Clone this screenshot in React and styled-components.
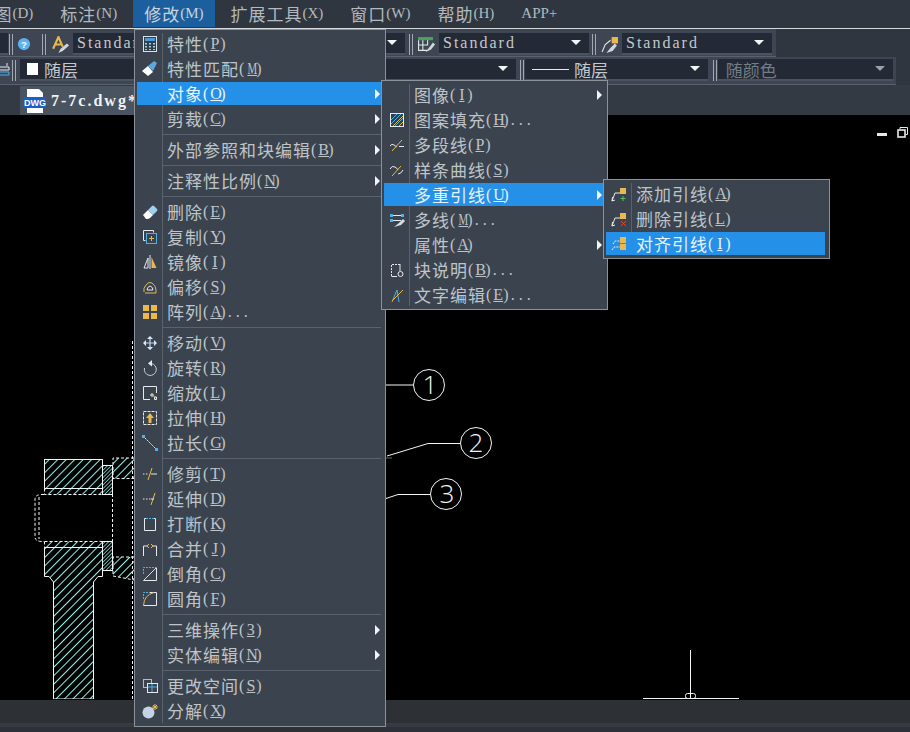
import React from "react";
import styled, {createGlobalStyle} from "styled-components";

const GlobalStyle = createGlobalStyle`
  html, body {
    margin: 0;
    background: #000;
  }
`;

const CJK = `"Noto Sans CJK SC", "Liberation Serif", sans-serif`;
const SERIF = `"Liberation Serif", "Noto Sans CJK SC", serif`;

const Page = styled.div`
  position: relative;
  display: flex;
  flex-direction: column;
  width: 910px;
  height: 732px;
  overflow: hidden;
  background: #000;
`;

const MenuBar = styled.div`
  display: flex;
  height: 29px;
  flex: none;
  box-sizing: border-box;
  background: #2f3640;
  border-bottom: 1px solid #d5d9dc;
  overflow: hidden;
`;

const BarItem = styled.div`
  flex: none;
  display: flex;
  align-items: center;
  height: 27px;
  padding: 0 11.5px;
  margin-right: 4px;
  margin-left: ${(p) => p.$offset || 0}px;
  font-family: ${CJK};
  font-size: 17px;
  letter-spacing: 1px;
  color: ${(p) => (p.$active ? "#c9d3dc" : "#b3b9bf")};
  background: ${(p) => (p.$active ? "#1c5f9e" : "transparent")};
`;

const BarLatin = styled.span`
  font-family: ${SERIF};
  font-size: 15px;
  letter-spacing: 0;
`;

const ToolRow = styled.div`
  display: flex;
  flex: none;
  align-items: center;
  height: 28px;
  box-sizing: border-box;
  background: #2f3640;
`;

const ToolStrip = styled.div`
  display: flex;
  align-items: center;
  width: ${(p) => p.$w}px;
  height: 100%;
  box-sizing: border-box;
  padding-top: ${(p) => p.$pt || 0}px;
  padding-bottom: ${(p) => p.$pb || 0}px;
  background: #3d4652;
  border-bottom: 1px solid #59626d;
`;

const Grip = styled.div`
  flex: none;
  width: 2px;
  height: 21px;
  margin-left: ${(p) => p.$ml || 0}px;
  border-left: 1px solid #a2a8ae;
  border-right: 1px solid #a2a8ae;
`;

const ToolIcon = styled.div`
  flex: none;
  display: flex;
  align-items: center;
  justify-content: center;
  width: ${(p) => p.$w}px;
  overflow: hidden;
`;

const Combo = styled.div`
  flex: none;
  display: flex;
  align-items: center;
  gap: 6px;
  width: ${(p) => p.$w}px;
  height: 22px;
  margin-left: ${(p) => p.$ml || 0}px;
  padding-left: 4px;
  box-sizing: border-box;
  background: #232935;
  border-bottom: 2px solid #4a535f;
  font-family: ${SERIF};
  font-size: 16px;
  letter-spacing: 2px;
  color: ${(p) => (p.$dim ? "#747c86" : "#c3c8cd")};
  overflow: hidden;
`;

const ComboCjk = styled.span`
  font-family: ${CJK};
  font-size: 17px;
  letter-spacing: 0;
  white-space: nowrap;
`;

const DropArrow = styled.span`
  flex: none;
  width: 0;
  height: 0;
  margin-left: auto;
  margin-right: 8px;
  margin-top: -2px;
  border-left: 5px solid transparent;
  border-right: 5px solid transparent;
  border-top: 5px solid ${(p) => (p.$dim ? "#9aa1a8" : "#f2f4f5")};
`;

const Swatch = styled.span`
  flex: none;
  width: 11px;
  height: 12px;
  margin-left: 3px;
  background: #fff;
`;

const LineSample = styled.span`
  flex: none;
  width: 37px;
  height: 1px;
  margin-left: 3px;
  margin-right: -1px;
  background: #e8eaec;
`;

const TabStrip = styled.div`
  display: flex;
  flex: none;
  align-items: flex-end;
  height: 30px;
  padding-left: 20px;
  background: #333a44;
`;

const Tab = styled.div`
  display: flex;
  align-items: center;
  gap: 5px;
  width: 130px;
  height: 29px;
  padding-left: 4px;
  box-sizing: border-box;
  background: #4a5461;
  font-family: ${SERIF};
  font-size: 16px;
  font-weight: 700;
  letter-spacing: 2px;
  color: #f0f2f4;
  white-space: nowrap;
`;

const Canvas = styled.div`
  position: relative;
  flex: 1;
  background: #000;
`;

const Drawing = styled.svg`
  display: block;
`;

const WindowButtons = styled.div`
  position: absolute;
  top: 12px;
  right: 2px;
  display: flex;
  align-items: center;
  gap: 10px;
`;

const MinButton = styled.span`
  width: 10px;
  height: 3px;
  margin-top: 3px;
  background: #e8e8e8;
`;

const RestoreButton = styled.svg`
  display: block;
`;

const BottomBar = styled.div`
  flex: none;
  height: 32px;
  box-sizing: border-box;
  padding-top: 23px;
  background: #2d3035;
`;

const BottomBand = styled.div`
  height: 4px;
  background: #363a45;
`;

const Menu = styled.div`
  position: absolute;
  left: ${(p) => p.$x}px;
  top: ${(p) => p.$y}px;
  display: flex;
  flex-direction: column;
  width: ${(p) => p.$w}px;
  box-sizing: border-box;
  padding: 1px 4px ${(p) => p.$pb}px 2px;
  background: #3a434e;
  border: 1px solid #8b929a;
  font-family: ${CJK};
  font-size: 17px;
  letter-spacing: 1px;
  color: #bfc4c9;

  &::before {
    content: "";
    position: absolute;
    left: 27px;
    top: 3px;
    bottom: 3px;
    width: 1px;
    background: #59626d;
  }
`;

const MenuRow = styled.div`
  position: relative;
  flex: none;
  display: flex;
  align-items: center;
  height: 23px;
  margin: 1px 0;
  background: ${(p) => (p.$active ? "#2490e8" : "transparent")};
  color: ${(p) => (p.$active ? "#e9f3fb" : "inherit")};
  white-space: nowrap;
`;

const MenuIcon = styled.div`
  flex: none;
  display: flex;
  align-items: center;
  justify-content: center;
  width: 25px;
  height: 100%;
  margin-right: 5px;
`;

const Hot = styled.span`
  font-family: ${SERIF};
  font-size: 16px;
  letter-spacing: 2px;
`;

const HotKey = styled.u`
  display: inline-block;
  width: 9px;
  text-align: center;
  letter-spacing: 0;
  margin-right: 1px;
  transform: ${(p) => (p.$wide ? "scaleX(.68)" : "none")};
  white-space: nowrap;
`;

const Dots = styled.span`
  letter-spacing: 4px;
`;

const SubArrow = styled.span`
  width: 0;
  height: 0;
  margin-left: auto;
  margin-right: 1px;
  border-top: 5px solid transparent;
  border-bottom: 5px solid transparent;
  border-left: 5px solid #f2f4f5;
`;

const MenuSep = styled.div`
  flex: none;
  height: 1px;
  margin: 2.5px 0 2.5px 26px;
  background: #59626d;
`;

const W = "#e6eaed";
const G = "#e9b84e";
const B = "#4fb0ea";

const glyphs = {
  calc: <><rect x="1.5" y=".5" width="13" height="15" fill="#2f3f4c" stroke="#dce4e8"/><rect x="3" y="2" width="10" height="3" fill="#4a9ad8"/><path d="M3 7h2v1.5H3zM7 7h2v1.5H7zM11 7h2v1.5h-2zM3 10h2v1.5H3zM7 10h2v1.5H7zM11 10h2v1.5h-2zM3 13h2v1H3zM7 13h2v1H7zM11 13h2v1h-2z" fill="#a8cde8"/></>,
  brush: <><path d="M0 10 L6 5 L11 11 L6 15 Z" fill="#fff"/><path d="M6 5 L12 0 L15 2 L11 10 Z" fill="#5ea8e0"/></>,
  eraser: <><path d="M1 11 L6 6 L11 11 L8 14 Q7 15 5 15 L4 15 Z" fill="#fff"/><path d="M6 6 L10 2 Q11 1 12 2 L15 5 Q16 6 15 7 L11 11 Z" fill="#9fd0f2"/></>,
  copy: <><path d="M3.5 11.5H1.5V1.5H11.5V3.5" fill="none" stroke={W}/><rect x="4.5" y="4.5" width="10" height="10" fill="none" stroke={B}/><path d="M9.5 7v5M7 9.5h5" stroke={G}/></>,
  mirror: <><path d="M2 14 L6 4 V14 Z" fill="none" stroke={W}/><path d="M8 1V15" stroke={W}/><path d="M9.5 3 L14.5 14 H9.5 Z" fill={G}/></>,
  offset: <><path d="M2 13 Q1 9 4 6 Q7 2 10 4 Q14 7 14 11 L14 14 H3" fill="none" stroke={G}/><path d="M5 11 Q5 8 8 7 Q11 8 11 11 H5" fill="none" stroke={W}/></>,
  array: <><rect x="1" y="1" width="6" height="6" fill={G}/><rect x="9" y="1" width="6" height="6" fill={G}/><rect x="1" y="9" width="6" height="6" fill={G}/><rect x="9" y="9" width="6" height="6" fill={G}/></>,
  move: <><path d="M8 1 L11 4 H5 Z M8 15 L5 12 H11 Z M1 8 L4 5 V11 Z M15 8 L12 11 V5 Z" fill={W}/><path d="M8 3V13M3 8H13" stroke="#b8d8f0" strokeWidth="1.2"/></>,
  rotate: <><path d="M9 3.5 A6 6 0 1 1 2.5 8" fill="none" stroke="#c9ced3"/><path d="M6 3.5 L10 0 V6.5 Z" fill={W}/></>,
  scale: <><path d="M8 14.5H1.5V1.5H14.5V8" fill="none" stroke={W}/><path d="M9 9h2v2H9zM12.5 12h2v2.5h-2z" fill="none" stroke={W}/><path d="M10 10l4 3" stroke={G}/></>,
  stretch: <><rect x="1.5" y="1.5" width="13" height="13" fill="none" stroke={W} strokeDasharray="3 1"/><path d="M8 3 L12 8 H9.5 V13 H6.5 V8 H4 Z" fill={G}/></>,
  lengthen: <><path d="M3 3 L14 14" stroke={W} strokeDasharray="2 1"/><rect x="0" y="0" width="3" height="3" fill={B}/><rect x="13" y="13" width="3" height="3" fill={B}/></>,
  trim: <><path d="M6 14 L10 2" stroke={G}/><path d="M1 8h1.5M4 8h1.5" stroke={W}/><path d="M9 8h6" stroke={W}/></>,
  extend: <><path d="M9 14 L13 2" stroke={G}/><path d="M1 8h1.5M4 8h1.5M7 8h1.5" stroke={W}/><path d="M9 8h3" stroke={W}/></>,
  breakIcon: <><path d="M4 2.5H2.5V14.5H13.5V2.5H12" fill="none" stroke={W}/><path d="M4 2.5H12" stroke={B} strokeDasharray="2 1"/></>,
  join: <><path d="M1.5 15V5H5M14.5 15V5H11" fill="none" stroke={W}/><path d="M5 5L7 3M5 5L7 7M11 5L9 3M11 5L9 7" stroke={G}/></>,
  chamfer: <><path d="M1.5 8V1.5H14" fill="none" stroke={B} strokeDasharray="2 1"/><path d="M1.5 14.5H14.5V2" fill="none" stroke={W}/><path d="M1.5 14.5L14.5 1.5" stroke="#d8dde0"/></>,
  fillet: <><path d="M1.5 8V1.5H8" fill="none" stroke={B} strokeDasharray="2 1"/><path d="M8 14.5H14.5V1.5H8" fill="none" stroke={W}/><path d="M1.5 14.5Q2 4 12 1.5" fill="none" stroke={G}/><path d="M1.5 14.5H8" stroke={W}/></>,
  space: <><rect x="1.5" y="1.5" width="8" height="8" fill="none" stroke={G}/><rect x="5.5" y="5.5" width="10" height="9" fill="#3a434e" stroke={W}/><path d="M6 9h9M10 6v8" stroke={B}/></>,
  explode: <><circle cx="6.5" cy="9.5" r="6" fill="#c5d2e6"/><path d="M13 1v6M10 4h6M11 2l4 4M15 2l-4 4" stroke={G}/></>,
  hatch: <><rect x="1.5" y="1.5" width="13" height="13" fill="#2f3f4c" stroke={W}/><path d="M2 8L8 2M2 12L12 2M6 14L14 6" stroke={B}/><path d="M4 14L14 4M10 14L14 10" stroke={G}/></>,
  pline: <><path d="M1 9Q3 6 5 8L8 10" fill="none" stroke={W}/><path d="M3 14L13 3" stroke={G}/><path d="M10 9.5h5" stroke={W}/></>,
  spline: <><path d="M1 7Q3 3 6 5T9 8" fill="none" stroke={W}/><path d="M3 14L12 4" stroke={G}/><path d="M9 12Q12 12 14 8" fill="none" stroke={W}/></>,
  mline: <><rect x="1" y="2" width="3" height="3" fill={B}/><rect x="12" y="2" width="3" height="3" fill={B}/><rect x="1" y="7" width="3" height="3" fill={B}/><path d="M4 3.5H12M4 8.5H12" stroke={W}/><path d="M5 15L10 11L14 7L16 9L12 13Z" fill="#d9dfe4"/></>,
  blockNote: <><path d="M2.5 14V2.5H11" fill="none" stroke={W} strokeDasharray="2 1"/><path d="M11 2V9M2.5 14.5H8" stroke={W}/><circle cx="11.5" cy="12" r="2.5" fill="none" stroke={W}/></>,
  textEdit: <><path d="M3 15L8 3L10 15" fill="none" stroke={B}/><path d="M3 14L14 3" stroke={G}/></>,
  leaderAdd: <><path d="M1 15L4 7H9" fill="none" stroke={W}/><path d="M1 15L4 14M1 15L1.5 11" stroke={W}/><rect x="9" y="2" width="6" height="6" fill={G}/><path d="M12 10v5M9.5 12.5h5" stroke="#4fc36a"/></>,
  leaderDel: <><path d="M1 15L4 7H9" fill="none" stroke={W}/><path d="M1 15L4 14M1 15L1.5 11" stroke={W}/><rect x="9" y="2" width="6" height="6" fill={G}/><path d="M10 10l5 5M15 10l-5 5" stroke="#d8503c"/></>,
  leaderAlign: <><path d="M2 8L4 5H9M1 14L3 11H9" fill="none" stroke={W} strokeDasharray="2 1"/><rect x="9" y="1" width="6" height="6" fill={G}/><rect x="9" y="8" width="6" height="6" fill={G}/></>,
  help: <><circle cx="8" cy="8" r="7" fill="#5cb2ee"/><text x="8" y="12" textAnchor="middle" fontSize="11" fontWeight="700" fontFamily="Liberation Sans" letterSpacing="0" fill="#fff">?</text></>,
  textStyle: <><path d="M2 12L7 1L11 10M4 8H9" fill="none" stroke={G} strokeWidth="2"/><path d="M7 16L9 12L15 7L17 9L11 14Z" fill="#cfd6dc"/></>,
  table: <><rect x="1" y="1" width="14" height="3" fill="#49a35f"/><path d="M1.5 4V13.5H10M5.5 4V13M10 4V9M1.5 8.5H10" fill="none" stroke={W}/><path d="M8 15L12 10L15 6L17 8L13 13Z" fill="#cfd6dc"/></>,
  mleader: <><path d="M1 15L4 8L9 4" fill="none" stroke={W}/><rect x="10" y="1" width="6" height="6" fill={G}/><path d="M5 16L9 11L13 7L15 9L11 14Z" fill="#cfd6dc"/></>,
  layer: <><path d="M10 1v3M1 5H12V8H1Z" fill="none" stroke={W}/><path d="M1 10H12V13H1Z" fill="none" stroke={B}/></>,
};

const Icon = ({name, size = 16}) => (
  <svg width={size} height={size} viewBox="0 0 16 16" style={{display: "block", overflow: "visible"}}>
    {glyphs[name]}
  </svg>
);

const SEP = {sep: true};

const mainItems = [
  {icon: "calc", text: "特性", hot: "P"},
  {icon: "brush", text: "特性匹配", hot: "M"},
  {text: "对象", hot: "O", arrow: true, active: true},
  {text: "剪裁", hot: "C", arrow: true},
  SEP,
  {text: "外部参照和块编辑", hot: "B", arrow: true},
  SEP,
  {text: "注释性比例", hot: "N", arrow: true},
  SEP,
  {icon: "eraser", text: "删除", hot: "E"},
  {icon: "copy", text: "复制", hot: "Y"},
  {icon: "mirror", text: "镜像", hot: "I"},
  {icon: "offset", text: "偏移", hot: "S"},
  {icon: "array", text: "阵列", hot: "A", dots: true},
  SEP,
  {icon: "move", text: "移动", hot: "V"},
  {icon: "rotate", text: "旋转", hot: "R"},
  {icon: "scale", text: "缩放", hot: "L"},
  {icon: "stretch", text: "拉伸", hot: "H"},
  {icon: "lengthen", text: "拉长", hot: "G"},
  SEP,
  {icon: "trim", text: "修剪", hot: "T"},
  {icon: "extend", text: "延伸", hot: "D"},
  {icon: "breakIcon", text: "打断", hot: "K"},
  {icon: "join", text: "合并", hot: "J"},
  {icon: "chamfer", text: "倒角", hot: "C"},
  {icon: "fillet", text: "圆角", hot: "F"},
  SEP,
  {text: "三维操作", hot: "3", arrow: true},
  {text: "实体编辑", hot: "N", arrow: true},
  SEP,
  {icon: "space", text: "更改空间", hot: "S"},
  {icon: "explode", text: "分解", hot: "X"},
];

const objectItems = [
  {text: "图像", hot: "I", arrow: true},
  {icon: "hatch", text: "图案填充", hot: "H", dots: true},
  {icon: "pline", text: "多段线", hot: "P"},
  {icon: "spline", text: "样条曲线", hot: "S"},
  {text: "多重引线", hot: "U", arrow: true, active: true},
  {icon: "mline", text: "多线", hot: "M", dots: true},
  {text: "属性", hot: "A", arrow: true},
  {icon: "blockNote", text: "块说明", hot: "B", dots: true},
  {icon: "textEdit", text: "文字编辑", hot: "E", dots: true},
];

const leaderItems = [
  {icon: "leaderAdd", text: "添加引线", hot: "A"},
  {icon: "leaderDel", text: "删除引线", hot: "L"},
  {icon: "leaderAlign", text: "对齐引线", hot: "I", active: true},
];

const PopupMenu = ({items, x, y, w, pb = 2}) => (
  <Menu $x={x} $y={y} $w={w} $pb={pb}>
    {items.map((item, i) => item.sep ? <MenuSep key={i}/> : (
      <MenuRow key={i} $active={item.active}>
        <MenuIcon>{item.icon && <Icon name={item.icon}/>}</MenuIcon>
        {item.text}
        <Hot>(<HotKey $wide={item.hot === "M"}>{item.hot}</HotKey>){item.dots && <Dots>...</Dots>}</Hot>
        {item.arrow && <SubArrow/>}
      </MenuRow>
    ))}
  </Menu>
);

const HATCH = "#8ff5e8";
const LINE = "#f4f6f6";

const CadDrawing = () => (
  <Drawing width="910" height="584" viewBox="0 116 910 584">
    <defs>
      <pattern id="hatch" width="10" height="6" patternUnits="userSpaceOnUse" patternTransform="rotate(-45)">
        <line x1="0" y1="0" x2="10" y2="0" stroke={HATCH} strokeWidth="2"/>
      </pattern>
      <pattern id="hatchDense" width="10" height="2.6" patternUnits="userSpaceOnUse" patternTransform="rotate(-45)">
        <line x1="0" y1="0" x2="10" y2="0" stroke={HATCH} strokeWidth="1.4"/>
      </pattern>
    </defs>
    <g fill="none" stroke={LINE}>
      <rect x="44.5" y="460.5" width="58" height="29" fill="url(#hatch)"/>
      <rect x="44.5" y="489.5" width="58" height="6" fill="url(#hatch)" strokeDasharray="3 2"/>
      <rect x="102.5" y="466.5" width="10" height="29" fill="url(#hatchDense)"/>
      <path d="M44 495.5H41Q35 496 35 500V538Q35 542 41 542.5H44" strokeDasharray="3 2"/>
      <path d="M39 498V540" strokeDasharray="3 2"/>
      <path d="M112.5 495V542" strokeDasharray="3 2"/>
      <rect x="44.5" y="542.5" width="58" height="6" fill="url(#hatch)" strokeDasharray="3 2"/>
      <rect x="102.5" y="542.5" width="10" height="29" fill="url(#hatchDense)"/>
      <path d="M44.5 548.5H102.5V577.5H98L93.5 583V700H53.5V583L49 577.5H44.5Z" fill="url(#hatch)"/>
      <path d="M134 459H113V479.5H134" fill="url(#hatch)" strokeDasharray="3 2"/>
      <path d="M134 558H113V577L134 581" fill="url(#hatch)" strokeDasharray="3 2"/>
      <path d="M132.5 342V700" strokeDasharray="3 2"/>

      <path d="M386 386H413"/>
      <circle cx="429" cy="386" r="15.5"/>
      <path d="M387 457L428 444.5H460"/>
      <path d="M386 459H392" stroke="#666"/>
      <circle cx="476" cy="444" r="15.5"/>
      <path d="M386 499.5L398 495.5H430"/>
      <circle cx="446" cy="495" r="15.5"/>

      <path d="M690.5 651V699"/>
      <path d="M643 699.5H739"/>
      <rect x="685.5" y="694.5" width="10" height="5" rx="2"/>
    </g>
    <g fill={LINE} fontFamily="Open Sans, sans-serif" fontWeight="300" fontSize="26" textAnchor="middle">
      <text x="430" y="395">1</text>
      <text x="476" y="453">2</text>
      <text x="447" y="504">3</text>
    </g>
  </Drawing>
);

export default function App() {
  return (
    <Page>
      <GlobalStyle/>
      <MenuBar>
        <BarItem $offset={-35}>绘图<BarLatin>(D)</BarLatin></BarItem>
        <BarItem>标注<BarLatin>(N)</BarLatin></BarItem>
        <BarItem $active>修改<BarLatin>(M)</BarLatin></BarItem>
        <BarItem>扩展工具<BarLatin>(X)</BarLatin></BarItem>
        <BarItem>窗口<BarLatin>(W)</BarLatin></BarItem>
        <BarItem>帮助<BarLatin>(H)</BarLatin></BarItem>
        <BarItem><BarLatin>APP+</BarLatin></BarItem>
      </MenuBar>

      <ToolRow>
        <ToolStrip $w={776} $pt={3}>
          <Combo $w={8}/>
          <Grip $ml={1}/>
          <ToolIcon $w={21}><Icon name="help" size={14}/></ToolIcon>
          <Grip $ml={8}/>
          <ToolIcon $w={27}><Icon name="textStyle" size={17}/></ToolIcon>
          <Combo $w={332}>Standard<DropArrow/></Combo>
          <Grip $ml={4}/>
          <ToolIcon $w={25}><Icon name="table" size={17}/></ToolIcon>
          <Combo $ml={1} $w={150}>Standard<DropArrow/></Combo>
          <Grip $ml={3}/>
          <ToolIcon $w={26}><Icon name="mleader" size={17}/></ToolIcon>
          <Combo $w={150}>Standard<DropArrow/></Combo>
        </ToolStrip>
      </ToolRow>

      <ToolRow>
        <ToolStrip $w={896} $pb={1}>
          <ToolIcon $w={10}><Icon name="layer" size={16}/></ToolIcon>
          <Grip $ml={2}/>
          <Combo $ml={4} $w={496}><Swatch/><ComboCjk>随层</ComboCjk><DropArrow/></Combo>
          <Grip $ml={4}/>
          <Combo $ml={1} $w={183}><LineSample/><ComboCjk>随层</ComboCjk><DropArrow/></Combo>
          <Grip $ml={5}/>
          <Combo $ml={1} $w={175} $dim><ComboCjk>&nbsp;随颜色</ComboCjk><DropArrow $dim/></Combo>
        </ToolStrip>
      </ToolRow>

      <TabStrip>
        <Tab>
          <svg width="22" height="24" viewBox="0 0 22 24" style={{flex: "none"}}>
            <path d="M3 0H15L19 4V24H3Z" fill="#fff"/>
            <rect x="0" y="8" width="22" height="11" fill="#1a5fc8"/>
            <text x="11" y="17" textAnchor="middle" fontSize="9" fontWeight="700" fontFamily="Liberation Sans" letterSpacing="0" fill="#fff">DWG</text>
          </svg>
          7-7c.dwg*
        </Tab>
      </TabStrip>

      <Canvas>
        <CadDrawing/>
        <WindowButtons>
          <MinButton/>
          <RestoreButton width="11" height="11" viewBox="0 0 11 11">
            <path d="M3 2.5V.5H10.5V7.5H8.5" fill="none" stroke="#e8e8e8"/>
            <rect x="1" y="3" width="7" height="7" fill="none" stroke="#e8e8e8" strokeWidth="1.6"/>
          </RestoreButton>
        </WindowButtons>
      </Canvas>

      <BottomBar><BottomBand/></BottomBar>

      <PopupMenu items={mainItems} x={134} y={29} w={252} pb={3}/>
      <PopupMenu items={objectItems} x={381} y={80} w={227}/>
      <PopupMenu items={leaderItems} x={603} y={179} w={227}/>
    </Page>
  );
}
